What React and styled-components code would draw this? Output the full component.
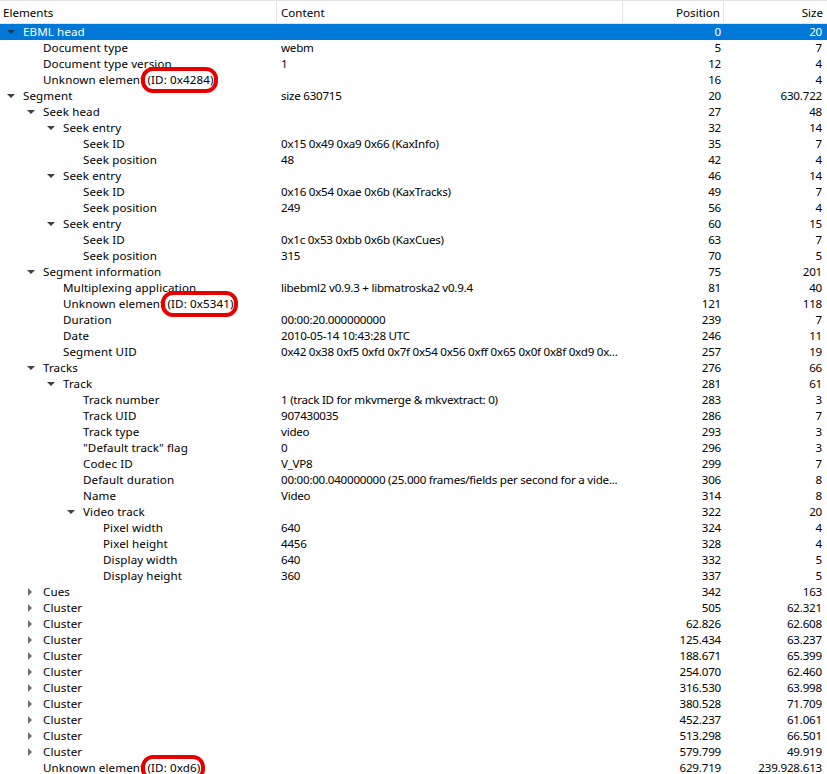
import React from 'react'
import styled, { createGlobalStyle } from 'styled-components'

const GlobalStyle = createGlobalStyle`
  html, body {
    margin: 0;
    padding: 0;
    background: #fff;
    overflow: hidden;
  }
  body {
    font-family: "Noto Sans", "Open Sans", sans-serif;
    font-size: 11.6px;
    color: #000;
  }
`

const COLS = '277px 346px 101px 103px'

// [level, label, content, position, size, state, marker]
// state: 'open' | 'closed' | null ; marker: id text circled in red
const rows = [
  [0, 'EBML head', '', '0', '20', 'open'],
  [1, 'Document type', 'webm', '5', '7'],
  [1, 'Document type version', '1', '12', '4'],
  [1, 'Unknown element', '', '16', '4', null, '(ID: 0x4284)'],
  [0, 'Segment', 'size 630715', '20', '630.722', 'open'],
  [1, 'Seek head', '', '27', '48', 'open'],
  [2, 'Seek entry', '', '32', '14', 'open'],
  [3, 'Seek ID', '0x15 0x49 0xa9 0x66 (KaxInfo)', '35', '7'],
  [3, 'Seek position', '48', '42', '4'],
  [2, 'Seek entry', '', '46', '14', 'open'],
  [3, 'Seek ID', '0x16 0x54 0xae 0x6b (KaxTracks)', '49', '7'],
  [3, 'Seek position', '249', '56', '4'],
  [2, 'Seek entry', '', '60', '15', 'open'],
  [3, 'Seek ID', '0x1c 0x53 0xbb 0x6b (KaxCues)', '63', '7'],
  [3, 'Seek position', '315', '70', '5'],
  [1, 'Segment information', '', '75', '201', 'open'],
  [2, 'Multiplexing application', 'libebml2 v0.9.3 + libmatroska2 v0.9.4', '81', '40'],
  [2, 'Unknown element', '', '121', '118', null, '(ID: 0x5341)'],
  [2, 'Duration', '00:00:20.000000000', '239', '7'],
  [2, 'Date', '2010-05-14 10:43:28 UTC', '246', '11'],
  [2, 'Segment UID', '0x42 0x38 0xf5 0xfd 0x7f 0x54 0x56 0xff 0x65 0x0f 0x8f 0xd9 0xc...', '257', '19'],
  [1, 'Tracks', '', '276', '66', 'open'],
  [2, 'Track', '', '281', '61', 'open'],
  [3, 'Track number', '1 (track ID for mkvmerge & mkvextract: 0)', '283', '3'],
  [3, 'Track UID', '907430035', '286', '7'],
  [3, 'Track type', 'video', '293', '3'],
  [3, '"Default track" flag', '0', '296', '3'],
  [3, 'Codec ID', 'V_VP8', '299', '7'],
  [3, 'Default duration', '00:00:00.040000000 (25.000 frames/fields per second for a vide...', '306', '8'],
  [3, 'Name', 'Video', '314', '8'],
  [3, 'Video track', '', '322', '20', 'open'],
  [4, 'Pixel width', '640', '324', '4'],
  [4, 'Pixel height', '4456', '328', '4'],
  [4, 'Display width', '640', '332', '5'],
  [4, 'Display height', '360', '337', '5'],
  [1, 'Cues', '', '342', '163', 'closed'],
  [1, 'Cluster', '', '505', '62.321', 'closed'],
  [1, 'Cluster', '', '62.826', '62.608', 'closed'],
  [1, 'Cluster', '', '125.434', '63.237', 'closed'],
  [1, 'Cluster', '', '188.671', '65.399', 'closed'],
  [1, 'Cluster', '', '254.070', '62.460', 'closed'],
  [1, 'Cluster', '', '316.530', '63.998', 'closed'],
  [1, 'Cluster', '', '380.528', '71.709', 'closed'],
  [1, 'Cluster', '', '452.237', '61.061', 'closed'],
  [1, 'Cluster', '', '513.298', '66.501', 'closed'],
  [1, 'Cluster', '', '579.799', '49.919', 'closed'],
  [1, 'Unknown element', '', '629.719', '239.928.613', null, '(ID: 0xd6)'],
]

const App = () => (
  <>
    <GlobalStyle />
    <TreeView>
      <Header>
        <HeaderCell>Elements</HeaderCell>
        <HeaderCell>Content</HeaderCell>
        <HeaderCell $right>Position</HeaderCell>
        <HeaderCell $right>Size</HeaderCell>
      </Header>
      {rows.map(([level, label, content, pos, size, state, marker], i) => (
        <Row key={i} $selected={i === 0}>
          <NameCell $level={level}>
            <Toggle>{state && <Arrow $state={state} $selected={i === 0} />}</Toggle>
            <Label>
              {label}
              {marker && <> <Marked>{marker}</Marked></>}
            </Label>
          </NameCell>
          <Cell $tight>{content}</Cell>
          <Cell $right>{pos}</Cell>
          <Cell $right>{size}</Cell>
        </Row>
      ))}
    </TreeView>
  </>
)

const TreeView = styled.div`
  width: 827px;
  height: 774px;
  overflow: hidden;
  display: flex;
  flex-direction: column;
`

const Header = styled.div`
  display: grid;
  grid-template-columns: ${COLS};
  height: 24px;
  flex-shrink: 0;
  box-sizing: border-box;
  border-top: 1px solid #e3e3e3;
  border-bottom: 1px solid #e5e5e5;
  background: #fff;
`

const HeaderCell = styled.div`
  display: flex;
  align-items: center;
  justify-content: ${(p) => (p.$right ? 'flex-end' : 'flex-start')};
  padding: 1px ${(p) => (p.$right ? '3px' : '0')} 0 ${(p) => (p.$right ? '0' : '3px')};
  border-right: 1px solid #e5e5e5;
  &:nth-child(2) { padding-left: 4px; }
  &:last-child { border-right: none; padding-right: 4px; }
`

const Row = styled.div`
  display: grid;
  grid-template-columns: ${COLS};
  height: 16px;
  line-height: 16px;
  flex-shrink: 0;
  background: ${(p) => (p.$selected ? '#0078d7' : '#fff')};
  color: ${(p) => (p.$selected ? '#fff' : '#000')};
`

const Cell = styled.div`
  white-space: nowrap;
  overflow: hidden;
  text-overflow: ellipsis;
  letter-spacing: ${(p) => (p.$tight ? '-0.25px' : '-0.2px')};
  text-align: ${(p) => (p.$right ? 'right' : 'left')};
  padding: ${(p) => (p.$right ? '0 3px 0 0' : '0 2px 0 4px')};
  &:last-child { padding-right: 5px; }
`

const NameCell = styled.div`
  display: flex;
  align-items: center;
  padding-left: ${(p) => p.$level * 20}px;
  white-space: nowrap;
`

const Toggle = styled.span`
  width: 20px;
  height: 16px;
  flex-shrink: 0;
  display: flex;
  align-items: center;
  justify-content: center;
`

const Arrow = styled.span`
  width: 0;
  height: 0;
  ${(p) =>
    p.$state === 'open'
      ? `
    border-left: 4px solid transparent;
    border-right: 4px solid transparent;
    border-top: 4px solid ${p.$selected ? '#1d3a55' : '#404040'};
    margin-left: 1px;
  `
      : `
    border-top: 4px solid transparent;
    border-bottom: 4px solid transparent;
    border-left: 4px solid #6d6d6d;
  `}
`

const Label = styled.span`
  margin-left: 3px;
  letter-spacing: 0.1px;
`

const Marked = styled.span`
  position: relative;
  &::after {
    content: "";
    position: absolute;
    left: -7px;
    right: -5px;
    top: -5px;
    bottom: -6px;
    border: 4px solid #e60000;
    border-radius: 12px;
  }
`

export default App
